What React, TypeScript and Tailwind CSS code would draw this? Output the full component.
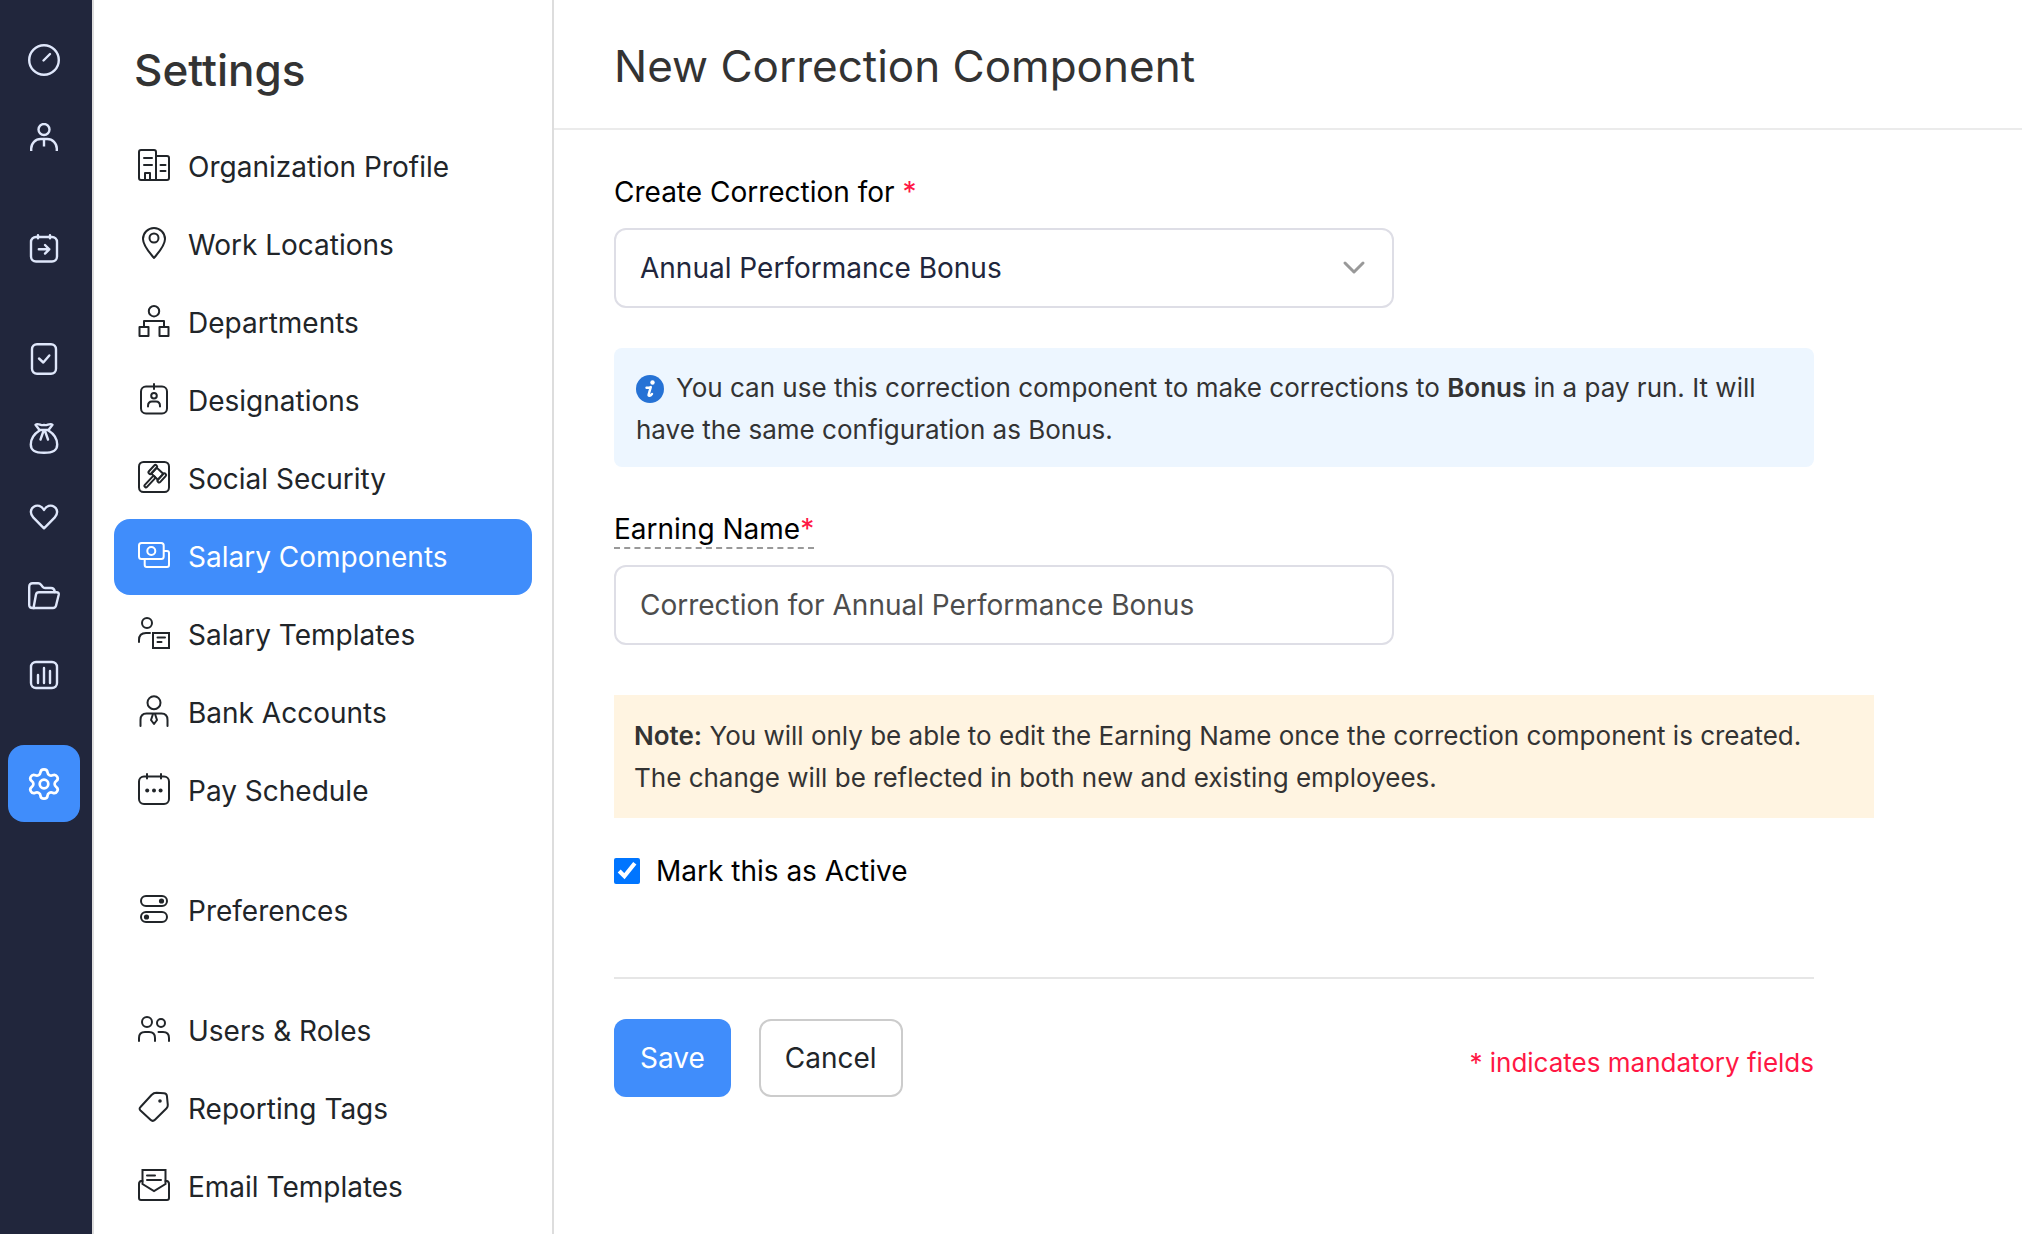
import React from "react";

type IconProps = { children: React.ReactNode; className?: string; sw?: number };

function Icon({ children, className = "size-8", sw = 2 }: IconProps) {
  return (
    <svg viewBox="0 0 32 32" className={`${className} shrink-0`} fill="none" stroke="currentColor" strokeWidth={sw} strokeLinecap="round" strokeLinejoin="round" aria-hidden="true">
      {children}
    </svg>
  );
}

const railGroups = [
  [
    { label: "Dashboard", icon: <><circle cx="16" cy="16" r="14.8" /><path d="M15.5 16.500 22 10" /></> },
    { label: "Employees", icon: <><circle cx="16" cy="6.500" r="5.500" /><path strokeLinecap="butt" d="M3.200 28v-2.500A9.500 9.500 0 0 1 12.700 16h6.600a9.500 9.500 0 0 1 9.500 9.500V28M16 16v7.500" /></> },
  ],
  [{ label: "Pay Runs", icon: <><rect x="3" y="4" width="26" height="24.500" rx="5" /><path d="M10 2.200v3M22 2.200v3M10.800 16.300h10.500M17 12l4.300 4.300-4.300 4.300" /></> }],
  [
    { label: "Approvals", icon: <><rect x="4" y="1.200" width="24" height="29.600" rx="5" /><path d="m11 15.500 4.300 4 6-7" /></> },
    { label: "Loans", icon: <><path d="M11.500 8 7.500 2.800C10 .5 13 4 16 3c3 1 6-2.500 8.500-.2L20.500 8Z" /><path d="M11.500 8.500C6 12 2.800 17.500 2.800 22.500c0 5.500 3.200 8.300 13.200 8.300s13.200-2.800 13.200-8.300c0-5-3.200-10.500-8.700-14M15.500 9l-3 8.500M17 9l3 8.500" /></> },
    { label: "Giving", icon: <path d="M16 27.300 5.200 16.300C1.800 12.800 2.300 8 5.800 5.800 9.200 3.400 13.700 4.800 16 9c2.300-4.200 6.800-5.600 10.200-3.200 3.500 2.200 4 7 .6 10.500Z" /> },
    { label: "Documents", icon: <><path d="M6 28H4.500c-2.200 0-3.300-1-3.300-3V7c0-2.500 1.300-3.700 3.500-3.700h5.500c1.500 0 2 .5 2.800 1.500l1.800 2.200c.6.8 1.200 1 2.200 1h6c2 0 3.500 1.500 3.800 4" /><path d="M5.500 28 8 14.500c.4-1.700 1.200-2.300 3-2.300h17.500c1.700 0 2.500 1 2.200 2.500L28 25.800c-.4 1.500-1.300 2.200-3 2.200Z" /></> },
    { label: "Reports", icon: <><rect x="3" y="3" width="26" height="26" rx="5" /><path d="M10 16v8M16 9v15M22 12v12" /></> },
  ],
];

const gear = (
  <>
    <path
      transform="translate(16 16) scale(1.52 1.47) translate(-12 -12)"
      strokeWidth="1.800"
      d="M9.671 4.136a2.34 2.34 0 0 1 4.659 0 2.34 2.34 0 0 0 3.319 1.915 2.34 2.34 0 0 1 2.33 4.033 2.34 2.34 0 0 0 0 3.831 2.34 2.34 0 0 1-2.33 4.033 2.34 2.34 0 0 0-3.319 1.915 2.34 2.34 0 0 1-4.659 0 2.34 2.34 0 0 0-3.32-1.915 2.34 2.34 0 0 1-2.33-4.033 2.34 2.34 0 0 0 0-3.831A2.34 2.34 0 0 1 6.35 6.051a2.34 2.34 0 0 0 3.319-1.915"
    />
    <circle cx="16" cy="16" r="4.300" />
  </>
);

const menuGroups = [
  [
    { label: "Organization Profile", icon: <><path d="M19 31H3c-1.500 0-2-.5-2-2V3c0-1.500.5-2 2-2h13c1.500 0 2 .5 2 2v28h11c1.500 0 2-.5 2-2V9c0-1.500-.5-2-2-2H18M6 9h8M6 16h8M22.500 16h5M22.500 22h5M7 31v-7h5v7" /></> },
    { label: "Work Locations", icon: <><path d="M16 31C12 26 5 19 5 12a11 11 0 0 1 22 0c0 7-7 14-11 19Z" /><circle cx="16" cy="11" r="4.500" /></> },
    { label: "Departments", icon: <><circle cx="16" cy="6.200" r="5.200" /><path d="M6 22v-6h20v6" /><rect x="1.500" y="22" width="9" height="9" /><rect x="21.500" y="22" width="9" height="9" /></> },
    { label: "Designations", icon: <><rect x="3" y="3.500" width="26" height="27" rx="5" /><path d="M16 1v5" /><circle cx="16" cy="12.700" r="2.800" /><path d="M10 23.500v-.5c0-3 1.500-4.500 4-4.500h4c2.500 0 4 1.500 4 4.500v.5" /></> },
    { label: "Social Security", icon: <><rect x="1" y="1" width="30" height="30" rx="4.500" /><g transform="translate(19.300 12.700) rotate(43)"><rect x="-4.500" y="-4" width="9" height="8" /><rect x="-7.800" y="-5.500" width="3.300" height="11" rx="1.600" /><rect x="4.500" y="-5.500" width="3.300" height="11" rx="1.600" /><rect x="-1.500" y="4" width="3" height="14" rx="1" /></g></> },
    { label: "Salary Components", active: true, icon: <><rect x="1" y="4" width="24.700" height="16" rx="2.500" /><circle cx="13.300" cy="12" r="4" /><path d="M26 12h3c1.500 0 2 .5 2 2v12c0 1.500-.5 2-2 2H8.700c-1.500 0-2-.5-2-2v-6" /></> },
    { label: "Salary Templates", icon: <><circle cx="9" cy="6" r="5" /><path d="M1 25v-2c0-5 3-7 7-7h4" /><path strokeLinejoin="miter" d="M15 16h16v15H15zM19.500 20.500h7.500M19.500 25h4" /></> },
    { label: "Bank Accounts", icon: <><circle cx="16" cy="7.700" r="6.500" /><path d="M2.500 31v-6c0-4 2-6.500 6-6.500h15c4 0 6 2.500 6 6.500v6M15 19l-2 6 3 4 3-4-2-6" /></> },
    { label: "Pay Schedule", icon: <><rect x="1" y="3.500" width="30" height="27.500" rx="5" /><path d="M9 1v4.500M23 1v4.500" /><g fill="currentColor" stroke="none"><circle cx="9.200" cy="17.500" r="2" /><circle cx="16" cy="17.500" r="2" /><circle cx="22.600" cy="17.500" r="2" /></g></> },
  ],
  [{ label: "Preferences", icon: <><rect x="3" y="3" width="26" height="10" rx="5" /><rect x="3" y="19" width="26" height="10" rx="5" /><circle cx="23.500" cy="8" r="1.600" fill="currentColor" /><circle cx="8.500" cy="24" r="1.600" fill="currentColor" /></> }],
  [
    { label: "Users & Roles", icon: <><circle cx="9" cy="9" r="5" /><circle cx="23" cy="10" r="4" /><path d="M1 28v-3c0-4 2-6 6-6h4c4 0 6 2 6 6v3M20.500 19H25c4 0 6 2 6 6v3" /></> },
    { label: "Reporting Tags", icon: <><path d="m2.500 16 11-12c2-2 3-2.200 5-2.200l7.500.5c2 .1 2.700 1 2.900 2.500l.9 9c.1 1.500-.2 2.500-1.200 3.500L17 28.800c-1.500 1.500-3 1.500-4.500 0L2.500 19.500c-1.200-1.200-1.200-2.400 0-3.500Z" /><circle cx="22" cy="10" r=".8" fill="currentColor" /></> },
    { label: "Email Templates", icon: <><path d="M4.500 12H3c-1.500.5-2 1-2 3v14c0 1.500.5 2 2 2h26c1.500 0 2-.5 2-2V15c0-2-.5-2.500-2-3h-1.500" /><path strokeLinejoin="miter" d="M4.500 15V1h23v14L16 22ZM9 6.500h8M9 11h14" /></> },
  ],
];

export default function App() {
  return (
    <div className="flex min-h-screen bg-white font-[Inter,sans-serif] text-[28px] leading-10 text-[#212529]">
      <nav aria-label="Main" className="flex w-[94px] shrink-0 flex-col items-center gap-[31px] border-r-2 border-[#dddddd] bg-[#21263c] pr-1 pt-5 text-[#dfe7fb]">
        {railGroups.map((group, i) => (
          <div key={i} className="flex flex-col">
            {group.map((item) => (
              <button key={item.label} type="button" aria-label={item.label} className="flex h-[79px] w-[72px] items-center justify-center">
                <Icon sw={2.4}>{item.icon}</Icon>
              </button>
            ))}
          </div>
        ))}
        <button type="button" aria-label="Settings" className="flex h-[77px] w-[72px] items-center justify-center rounded-2xl bg-[#408dfb] text-white">
          <Icon sw={2.7}>{gear}</Icon>
        </button>
      </nav>

      <aside className="w-[460px] shrink-0 border-r-2 border-[#dddddd] px-5">
        <h2 className="px-5 pt-10 text-[44px] font-medium leading-[60px] text-[#333333]">Settings</h2>
        <nav aria-label="Settings" className="flex flex-col gap-11 pt-[29px]">
          {menuGroups.map((group, i) => (
            <div key={i} className="flex flex-col gap-0.5">
              {group.map((item) => (
                <a key={item.label} href="#" className={"active" in item ? "flex h-[76px] items-center gap-[18px] rounded-2xl bg-[#408dfb] px-6 text-white" : "flex h-[76px] items-center gap-[18px] px-6"}>
                  <Icon className="mb-1 size-8">{item.icon}</Icon>
                  {item.label}
                </a>
              ))}
            </div>
          ))}
        </nav>
      </aside>

      <main className="min-w-0 flex-1">
        <header className="border-b-2 border-[#ebebeb] px-15 pb-8 pt-9">
          <h1 className="text-[44px] leading-[60px] text-[#333333]">New Correction Component</h1>
        </header>
        <form className="px-15 pt-[42px]" onSubmit={(e) => e.preventDefault()}>
          <label htmlFor="source" className="block text-black">
            Create Correction for <span className="text-[#ff1744]">*</span>
          </label>
          <div className="relative mt-4 max-w-[780px]">
            <select id="source" className="h-20 w-full appearance-none rounded-xl border-2 border-[#dedee6] bg-white px-6 text-[#21263c]">
              <option>Annual Performance Bonus</option>
            </select>
            <svg viewBox="0 0 24 16" className="pointer-events-none absolute right-7 top-8 h-4 w-6" fill="none" stroke="#999999" strokeWidth="3" strokeLinecap="round" strokeLinejoin="round" aria-hidden="true">
              <path d="m3 3 9 9 9-9" />
            </svg>
          </div>

          <p className="mt-10 max-w-[1200px] rounded-lg bg-[#edf6ff] px-[22px] pb-4 pt-[19px] text-[26px] leading-[42px] text-[#333333]">
            <svg viewBox="0 0 28 28" className="mr-3 inline size-7 align-[-6px]" aria-hidden="true">
              <circle cx="14" cy="14" r="14" fill="#2672d5" />
              <circle cx="16.500" cy="7.500" r="2.200" fill="white" />
              <path d="M10.500 12.700c1.700.2 3-.1 4.300-.6l-2.200 7.600c-.4 1.600 1.400 1.700 3.400-.8" fill="none" stroke="white" strokeWidth="2.400" strokeLinecap="round" strokeLinejoin="round" />
            </svg>
            You can use this correction component to make corrections to <strong className="font-semibold">Bonus</strong> in a pay run. It will have the same configuration as Bonus.
          </p>

          <label htmlFor="earning" className="mt-11 inline-block border-b-2 border-dashed border-[#999999] leading-9 text-black">
            Earning Name<span className="text-[#ff1744]">*</span>
          </label>
          <input id="earning" type="text" defaultValue="Correction for Annual Performance Bonus" className="mt-4 block h-20 w-full max-w-[780px] rounded-xl border-2 border-[#dedee6] px-6 text-[#4d4d4d]" />

          <p className="mt-[50px] max-w-[1260px] bg-[#fff4e1] px-5 pb-[19px] pt-5 text-[26px] leading-[42px] text-[#333333]">
            <strong className="font-semibold">Note:</strong> You will only be able to edit the Earning Name once the correction component is created.
            <br />
            The change will be reflected in both new and existing employees.
          </p>

          <label className="mt-[33px] flex items-center gap-4 text-black">
            <input type="checkbox" defaultChecked className="size-[26px] accent-[#0075ff]" />
            Mark this as Active
          </label>

          <footer className="mt-[86px] flex max-w-[1200px] items-center border-t-2 border-[#e6e6e6] pt-10">
            <button type="submit" className="h-[78px] rounded-xl bg-[#408dfb] px-[26px] text-white">Save</button>
            <button type="button" className="ml-7 h-[78px] rounded-xl border-2 border-[#cccccc] px-6">Cancel</button>
            <p className="ml-auto pt-2.5 text-[26px] text-[#ff1744]">* indicates mandatory fields</p>
          </footer>
        </form>
      </main>
    </div>
  );
}
